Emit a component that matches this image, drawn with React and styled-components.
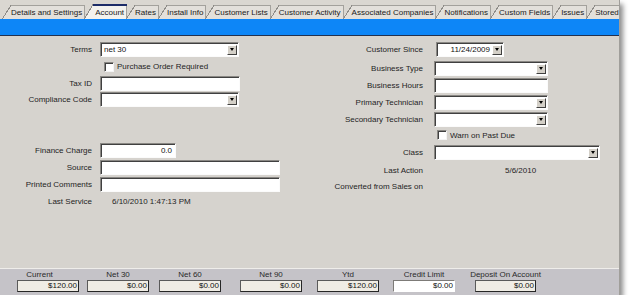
import React from "react";
import styled, { createGlobalStyle } from "styled-components";

const GlobalStyle = createGlobalStyle`
  html, body {
    margin: 0;
    padding: 0;
    background: #fff;
  }
  body {
    font-family: "Liberation Sans", Arial, sans-serif;
    font-size: 8px;
    color: #1e1e1e;
  }
`;

const Window = styled.div`
  width: 619px;
  height: 295px;
  display: flex;
  flex-direction: column;
  background: #d6d3ce;
  border-right: 1px solid #a09e9a;
  box-shadow: 3px 4px 5px rgba(0, 0, 0, 0.45);
  overflow: hidden;
`;

const TabStrip = styled.div`
  height: 19px;
  flex: none;
  display: flex;
  align-items: flex-end;
  padding-left: 3px;
  background: #dad7d1;
  white-space: nowrap;
  overflow: hidden;
`;

const tabFill = (p) => (p.$active ? "#f3f2ee" : "#e3e0db");
const tabTop = (p) => (p.$active ? "#1c2c68" : "#a3a19c");

const Tab = styled.div`
  flex: none;
  box-sizing: border-box;
  height: ${(p) => (p.$active ? 15 : 14)}px;
  display: flex;
  align-items: center;
  padding: ${(p) => (p.$active ? "1px" : "0")} ${(p) => (p.$last ? 1 : 3)}px 0 ${(p) => (p.$active ? 11 : 9)}px;
  margin-left: -1px;
  color: #1a1a1a;
  background:
    linear-gradient(${tabTop}, ${tabTop}) 9px 0 / calc(100% - 9px) ${(p) => (p.$active ? 2 : 1)}px no-repeat,
    linear-gradient(#a3a19c, #a3a19c) right 0 / 1px 100% no-repeat,
    linear-gradient(
        to top left,
        ${tabFill} calc(50% - 0.7px),
        #8e8c88 calc(50% - 0.7px),
        #8e8c88 calc(50% + 0.3px),
        transparent calc(50% + 0.3px)
      )
      0 0 / 9px 100% no-repeat,
    linear-gradient(${tabFill}, ${tabFill}) 9px 0 / calc(100% - 9px) 100% no-repeat;
`;

const BlueBar = styled.div`
  height: 16px;
  flex: none;
  background: #0d86f7;
  border-bottom: 1px solid #22314f;
`;

const Body = styled.div`
  flex: 1;
  display: flex;
  padding-top: 6px;
`;

const Column = styled.div`
  display: flex;
  flex-direction: column;
  width: ${(p) => p.$w || "auto"};
  flex: ${(p) => (p.$w ? "none" : "1")};
`;

const Row = styled.div`
  display: grid;
  grid-template-columns: ${(p) => p.$labelW}px auto;
  column-gap: ${(p) => p.$gap}px;
  align-items: center;
  height: ${(p) => p.$h || 15}px;
  margin-top: ${(p) => p.$mt || 0}px;
`;

const Label = styled.div`
  text-align: right;
  white-space: nowrap;
  color: #1e1e1e;
`;

const Value = styled.div`
  padding-left: ${(p) => p.$indent}px;
  white-space: nowrap;
  color: #1e1e1e;
`;

const Box = styled.div`
  box-sizing: border-box;
  width: ${(p) => p.$w}px;
  height: 15px;
  margin-left: ${(p) => p.$ml || 0}px;
  display: flex;
  align-items: center;
  justify-content: ${(p) => (p.$right ? "flex-end" : "flex-start")};
  padding: 0 ${(p) => (p.$btn ? 1 : 3)}px 0 3px;
  background: #fff;
  border: 1px solid;
  border-color: #8a8884 #fbfbfb #fbfbfb #8a8884;
  box-shadow: inset 1px 1px 0 #404040;
  white-space: nowrap;
  color: #111;
`;

const BoxText = styled.span`
  flex: 1;
  text-align: ${(p) => (p.$right ? "right" : "left")};
  padding-right: 2px;
`;

const DropButton = styled.span`
  box-sizing: border-box;
  width: 10px;
  height: 10px;
  flex: none;
  display: flex;
  align-items: center;
  justify-content: center;
  background: #d4d0c8;
  border: 1px solid;
  border-color: #fff #404040 #404040 #fff;

  &::after {
    content: "";
    border-left: 2.5px solid transparent;
    border-right: 2.5px solid transparent;
    border-top: 3px solid #000;
  }
`;

const CheckRow = styled.div`
  display: flex;
  align-items: center;
  gap: 3px;
  padding-left: ${(p) => p.$indent}px;
  white-space: nowrap;
  color: #1e1e1e;
`;

const CheckBox = styled.span`
  box-sizing: border-box;
  width: 10px;
  height: 10px;
  background: #fff;
  border: 1px solid;
  border-color: #8a8884 #f4f4f4 #f4f4f4 #8a8884;
  box-shadow: inset 1px 1px 0 #404040;
`;

const Footer = styled.div`
  height: 26px;
  flex: none;
  display: flex;
  border-top: 1px solid #efedea;
  background: #c5c3c8;
`;

const FooterCell = styled.div`
  width: ${(p) => p.$w}px;
  flex: none;
  margin-left: ${(p) => p.$ml}px;
  display: flex;
  flex-direction: column;
  align-items: center;
`;

const FooterLabel = styled.div`
  height: 11px;
  line-height: 11px;
  margin-right: ${(p) => p.$pull || 0}px;
  white-space: nowrap;
  color: #2a2a2a;
`;

const Amount = styled.div`
  box-sizing: border-box;
  width: 100%;
  height: 12px;
  line-height: 10px;
  text-align: right;
  padding-right: 1px;
  background: ${(p) => (p.$editable ? "#fff" : "#f0ede5")};
  border: 1px solid;
  border-color: ${(p) =>
    p.$editable ? "#7d7b78 #fff #fff #7d7b78" : "#5a5a5a #262626 #262626 #5a5a5a"};
  color: #111;
`;

const tabs = [
  "Details and Settings",
  "Account",
  "Rates",
  "Install Info",
  "Customer Lists",
  "Customer Activity",
  "Associated Companies",
  "Notifications",
  "Custom Fields",
  "Issues",
  "Stored",
];

const totals = [
  { label: "Current", value: "$120.00", ml: 17, w: 62, pull: 17 },
  { label: "Net 30", value: "$0.00", ml: 8, w: 62 },
  { label: "Net 60", value: "$0.00", ml: 10, w: 62 },
  { label: "Net 90", value: "$0.00", ml: 19, w: 62 },
  { label: "Ytd", value: "$120.00", ml: 15, w: 62 },
  { label: "Credit Limit", value: "$0.00", ml: 14, w: 62, editable: true },
  { label: "Deposit On Account", value: "$0.00", ml: 20, w: 61 },
];

function Select({ w, ml, right, children }) {
  return (
    <Box $w={w} $ml={ml} $btn>
      <BoxText $right={right}>{children}</BoxText>
      <DropButton />
    </Box>
  );
}

function LeftField({ label, mt, h, children }) {
  return (
    <Row $labelW={92} $gap={8} $mt={mt} $h={h}>
      <Label>{label}</Label>
      {children}
    </Row>
  );
}

function RightField({ label, mt, h, children }) {
  return (
    <Row $labelW={103} $gap={11} $mt={mt} $h={h}>
      <Label>{label}</Label>
      {children}
    </Row>
  );
}

export default function App() {
  return (
    <>
      <GlobalStyle />
      <Window>
        <TabStrip>
          {tabs.map((t, i) => (
            <Tab key={t} $active={t === "Account"} $last={i === tabs.length - 1}>
              {t}
            </Tab>
          ))}
        </TabStrip>
        <BlueBar />
        <Body>
          <Column $w="320px">
            <LeftField label="Terms">
              <Select w={139}>net 30</Select>
            </LeftField>
            <LeftField label="" mt={2}>
              <CheckRow $indent={4}>
                <CheckBox />
                Purchase Order Required
              </CheckRow>
            </LeftField>
            <LeftField label="Tax ID" mt={2}>
              <Box $w={140} />
            </LeftField>
            <LeftField label="Compliance Code" mt={1}>
              <Select w={139} />
            </LeftField>
            <LeftField label="Finance Charge" mt={36}>
              <Box $w={76} $right>
                0.0
              </Box>
            </LeftField>
            <LeftField label="Source" mt={2}>
              <Box $w={180} />
            </LeftField>
            <LeftField label="Printed Comments" mt={2}>
              <Box $w={180} />
            </LeftField>
            <LeftField label="Last Service" mt={2}>
              <Value $indent={12}>6/10/2010 1:47:13 PM</Value>
            </LeftField>
          </Column>
          <Column>
            <RightField label="Customer Since">
              <Select w={68} ml={2} right>
                11/24/2009
              </Select>
            </RightField>
            <RightField label="Business Type" mt={4}>
              <Select w={114} />
            </RightField>
            <RightField label="Business Hours" mt={2}>
              <Box $w={114} />
            </RightField>
            <RightField label="Primary Technician" mt={2}>
              <Select w={114} />
            </RightField>
            <RightField label="Secondary Technician" mt={2}>
              <Select w={114} />
            </RightField>
            <RightField label="" mt={1} h={14}>
              <CheckRow $indent={3}>
                <CheckBox />
                Warn on Past Due
              </CheckRow>
            </RightField>
            <RightField label="Class" mt={3}>
              <Select w={166} />
            </RightField>
            <RightField label="Last Action" mt={3} h={14}>
              <Value $indent={71}>5/6/2010</Value>
            </RightField>
            <RightField label="Converted from Sales on" mt={2} h={14}>
              <span />
            </RightField>
          </Column>
        </Body>
        <Footer>
          {totals.map((t) => (
            <FooterCell key={t.label} $ml={t.ml} $w={t.w}>
              <FooterLabel $pull={t.pull}>{t.label}</FooterLabel>
              <Amount $editable={t.editable}>{t.value}</Amount>
            </FooterCell>
          ))}
        </Footer>
      </Window>
    </>
  );
}
